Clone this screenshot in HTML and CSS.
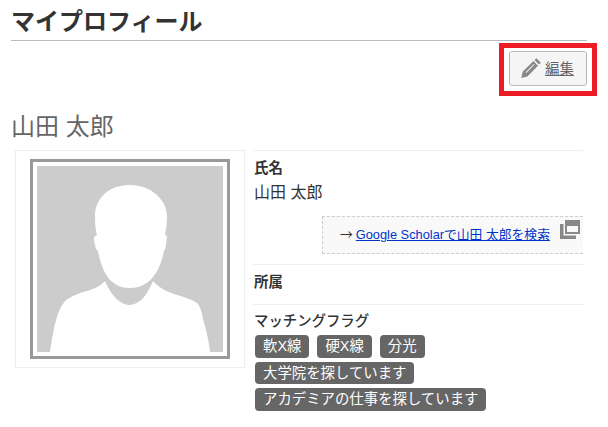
FILE: index.html
```html
<!DOCTYPE html>
<html lang="ja">
<head>
<meta charset="utf-8">
<title>マイプロフィール</title>
<link rel="stylesheet" href="styles.css">
</head>
<body>
<main class="page">
  <h1 class="title">マイプロフィール</h1>
  <div class="actions">
    <div class="highlight">
      <a class="edit-btn" href="#">
        <svg class="pencil" viewBox="0 0 20 20" width="20" height="20" aria-hidden="true"><path d="M15.4 0.3 19.8 4.7 18 6.6 13.5 2.1ZM12.4 3.1 17 7.7 6.4 18.4 0.3 19.9 1.6 13.8ZM4.6 14.2 5.3 14.9 13.6 6.6 12.9 5.9Z" fill-rule="evenodd"/></svg>
        <span class="edit-label">編集</span>
      </a>
    </div>
  </div>
  <h2 class="name">山田 太郎</h2>
  <div class="profile">
    <div class="photo-card">
      <div class="photo-frame">
        <svg class="avatar" viewBox="0 0 186 186" aria-hidden="true">
          <rect width="186" height="186" fill="#ccc"/>
          <path fill="#fff" d="M13 186C16 165 20 145 26 138C29 133 33 131 43 127C54 124 63 121 68 115C74 130 84 139 92 139C102 139 110 130 116 115C120 120 128 125 137 128C148 131 156 134 160 137C163 140 165 146 166 153C169 163 172 175 173 186Z"/>
          <path fill="#fff" d="M93 19C70 19 58 34 58 50C58 60 59 65 60 69C57 70 57 72 57 74C58 80 59 84 61 85C64 100 70 122 93 122C116 122 124 100 127 85C129 83 129 78 130 71C130 70 129 69 128 69C129 65 130 58 130 50C130 34 114 19 93 19Z"/>
        </svg>
      </div>
    </div>
    <div class="details">
      <section class="field field-name">
        <h3 class="label">氏名</h3>
        <p class="value">山田 太郎</p>
        <div class="scholar">
          <span class="arrow">→</span>
          <a class="scholar-link" href="#">Google Scholarで山田 太郎を検索</a>
          <svg class="external" viewBox="0 0 20 19" width="20" height="19" aria-hidden="true"><path fill="#888" d="M5 0H20V14H5ZM7 6V12H18V6Z" fill-rule="evenodd"/><path fill="#888" d="M0 4H3.5V15.5H16V19H0Z"/></svg>
        </div>
      </section>
      <section class="field field-affil">
        <h3 class="label">所属</h3>
      </section>
      <section class="field field-flags">
        <h3 class="label label-plain">マッチングフラグ</h3>
        <div class="tags">
          <div class="tag-row"><span class="tag">軟X線</span><span class="tag">硬X線</span><span class="tag">分光</span></div>
          <div class="tag-row"><span class="tag">大学院を探しています</span></div>
          <div class="tag-row"><span class="tag">アカデミアの仕事を探しています</span></div>
        </div>
      </section>
    </div>
  </div>
</main>
</body>
</html>
```
FILE: styles.css
```css
* { box-sizing: border-box; }
html, body { margin: 0; padding: 0; background: #fff; }
body {
  font-family: "Liberation Sans", "Noto Sans CJK JP", sans-serif;
  color: #333;
  width: 608px;
  height: 427px;
  overflow: hidden;
}
.page { padding: 0 21px 0 11px; }
.title {
  margin: 0;
  height: 41px;
  padding-top: 4px;
  font-size: 24px;
  line-height: 36px;
  font-weight: 700;
  color: #333;
  border-bottom: 1px solid #bbb;
  overflow: hidden;
}
.actions { display: flex; justify-content: flex-end; height: 55px; margin-right: -10px; padding-top: 2px; }
.highlight {
  width: 98px;
  height: 53px;
  border: 5px solid #ee1c25;
  padding: 3px 5px;
}
.edit-btn {
  display: flex;
  align-items: center;
  gap: 4px;
  height: 35px;
  padding-left: 11px;
  padding-bottom: 2px;
  background: #f5f5f5;
  border: 1px solid #bbb;
  border-radius: 3px;
  color: #666;
  font-size: 14.4px;
  text-decoration: underline;
}
.pencil { fill: #888; flex: none; }
.name {
  margin: 0;
  height: 54px;
  padding-top: 16px;
  font-size: 24px;
  line-height: 30px;
  font-weight: 400;
  color: #666;
}
.profile { display: flex; align-items: flex-start; padding-left: 4px; gap: 8px; }
.photo-card {
  width: 230px;
  height: 218px;
  flex: none;
  border: 1px solid #eee;
  padding: 8px 14px;
}
.photo-frame { width: 200px; height: 200px; border: 3px solid #999; padding: 4px; background: #fff; }
.avatar { display: block; width: 186px; height: 186px; }
.details { width: 330px; flex: none; }
.field { border-top: 1px solid #eee; }
.field-name { height: 114px; padding-top: 8px; }
.field-affil { height: 40px; padding-top: 8px; }
.field-flags { padding-top: 7px; }
.label { margin: 0 0 0 1px; font-size: 14.4px; line-height: 19px; font-weight: 700; color: #333; }
.label-plain { font-weight: 500; }
.value { margin: 3px 0 0 1px; font-size: 16px; line-height: 24px; }
.scholar {
  display: flex;
  align-items: center;
  height: 38px;
  margin: 11px 0 0 69px;
  padding: 0 0 3px 17px;
  background: #f9f9f9;
  border: 1px dashed #ccc;
  border-right: 0;
  font-size: 12.8px;
  position: relative;
}
.arrow { margin-right: 3px; font-family: "Noto Sans CJK JP", sans-serif; }
.scholar-link { color: #03c; text-decoration: underline; }
.external { position: absolute; right: 3px; top: 3px; }
.tags { margin: 4px 0 0 2px; }
.tag-row { display: flex; gap: 8px; margin-bottom: 4px; }
.tag {
  display: block;
  height: 22.5px;
  padding: 0 8px;
  background: #666;
  color: #fff;
  border-radius: 4px;
  font-size: 14.4px;
  line-height: 23px;
  white-space: nowrap;
}
```
